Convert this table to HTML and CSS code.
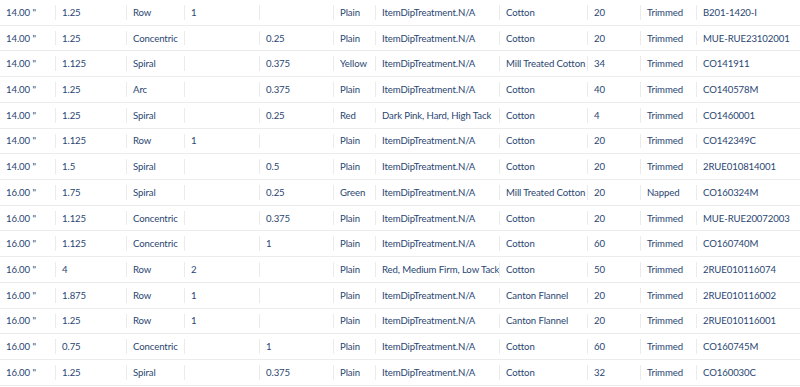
FILE: index.html
```html
<!DOCTYPE html>
<html>
<head>
<meta charset="utf-8">
<link rel="stylesheet" href="styles.css">
</head>
<body>
<table class="grid">
<colgroup>
<col class="c1"><col class="c2"><col class="c3"><col class="c4"><col class="c5"><col class="c6"><col class="c7"><col class="c8"><col class="c9"><col class="c10"><col class="c11">
</colgroup>
<tbody>
<tr><td>14.00 "</td><td>1.25</td><td>Row</td><td>1</td><td></td><td>Plain</td><td>ItemDipTreatment.N/A</td><td>Cotton</td><td>20</td><td>Trimmed</td><td>B201-1420-I</td></tr>
<tr><td>14.00 "</td><td>1.25</td><td>Concentric</td><td></td><td>0.25</td><td>Plain</td><td>ItemDipTreatment.N/A</td><td>Cotton</td><td>20</td><td>Trimmed</td><td>MUE-RUE23102001</td></tr>
<tr><td>14.00 "</td><td>1.125</td><td>Spiral</td><td></td><td>0.375</td><td>Yellow</td><td>ItemDipTreatment.N/A</td><td>Mill Treated Cotton</td><td>34</td><td>Trimmed</td><td>CO141911</td></tr>
<tr><td>14.00 "</td><td>1.25</td><td>Arc</td><td></td><td>0.375</td><td>Plain</td><td>ItemDipTreatment.N/A</td><td>Cotton</td><td>40</td><td>Trimmed</td><td>CO140578M</td></tr>
<tr><td>14.00 "</td><td>1.25</td><td>Spiral</td><td></td><td>0.25</td><td>Red</td><td>Dark Pink, Hard, High Tack</td><td>Cotton</td><td>4</td><td>Trimmed</td><td>CO1460001</td></tr>
<tr><td>14.00 "</td><td>1.125</td><td>Row</td><td>1</td><td></td><td>Plain</td><td>ItemDipTreatment.N/A</td><td>Cotton</td><td>20</td><td>Trimmed</td><td>CO142349C</td></tr>
<tr><td>14.00 "</td><td>1.5</td><td>Spiral</td><td></td><td>0.5</td><td>Plain</td><td>ItemDipTreatment.N/A</td><td>Cotton</td><td>20</td><td>Trimmed</td><td>2RUE010814001</td></tr>
<tr><td>16.00 "</td><td>1.75</td><td>Spiral</td><td></td><td>0.25</td><td>Green</td><td>ItemDipTreatment.N/A</td><td>Mill Treated Cotton</td><td>20</td><td>Napped</td><td>CO160324M</td></tr>
<tr><td>16.00 "</td><td>1.125</td><td>Concentric</td><td></td><td>0.375</td><td>Plain</td><td>ItemDipTreatment.N/A</td><td>Cotton</td><td>20</td><td>Trimmed</td><td>MUE-RUE20072003</td></tr>
<tr><td>16.00 "</td><td>1.125</td><td>Concentric</td><td></td><td>1</td><td>Plain</td><td>ItemDipTreatment.N/A</td><td>Cotton</td><td>60</td><td>Trimmed</td><td>CO160740M</td></tr>
<tr><td>16.00 "</td><td>4</td><td>Row</td><td>2</td><td></td><td>Plain</td><td>Red, Medium Firm, Low Tack</td><td>Cotton</td><td>50</td><td>Trimmed</td><td>2RUE010116074</td></tr>
<tr><td>16.00 "</td><td>1.875</td><td>Row</td><td>1</td><td></td><td>Plain</td><td>ItemDipTreatment.N/A</td><td>Canton Flannel</td><td>20</td><td>Trimmed</td><td>2RUE010116002</td></tr>
<tr><td>16.00 "</td><td>1.25</td><td>Row</td><td>1</td><td></td><td>Plain</td><td>ItemDipTreatment.N/A</td><td>Canton Flannel</td><td>20</td><td>Trimmed</td><td>2RUE010116001</td></tr>
<tr><td>16.00 "</td><td>0.75</td><td>Concentric</td><td></td><td>1</td><td>Plain</td><td>ItemDipTreatment.N/A</td><td>Cotton</td><td>60</td><td>Trimmed</td><td>CO160745M</td></tr>
<tr><td>16.00 "</td><td>1.25</td><td>Spiral</td><td></td><td>0.375</td><td>Plain</td><td>ItemDipTreatment.N/A</td><td>Cotton</td><td>32</td><td>Trimmed</td><td>CO160030C</td></tr>
</tbody>
</table>
</body>
</html>
```

FILE: styles.css
```css
html, body {
  margin: 0;
  padding: 0;
  background: #ffffff;
}
body {
  font-family: "Lato", "Open Sans", sans-serif;
  font-size: 9.6px;
  letter-spacing: -0.1px;
  color: #2a4672;
  overflow: hidden;
}
.grid {
  width: 800px;
  border-collapse: collapse;
  table-layout: fixed;
}
.c1 { width: 56px; }
.c2 { width: 71px; }
.c3 { width: 58px; }
.c4 { width: 75px; }
.c5 { width: 74px; }
.c6 { width: 42px; }
.c7 { width: 124px; }
.c8 { width: 88px; }
.c9 { width: 53px; }
.c10 { width: 56px; }
.c11 { width: 103px; }
.grid td {
  position: relative;
  height: 24.73px;
  padding: 0 4px 0 6px;
  border-bottom: 1px solid #ececec;
  white-space: nowrap;
  vertical-align: middle;
}
.grid td::after {
  content: "";
  position: absolute;
  right: 0;
  top: 5px;
  bottom: 5px;
  width: 1px;
  background: #ebebeb;
}
.grid td:last-child::after {
  display: none;
}
```
